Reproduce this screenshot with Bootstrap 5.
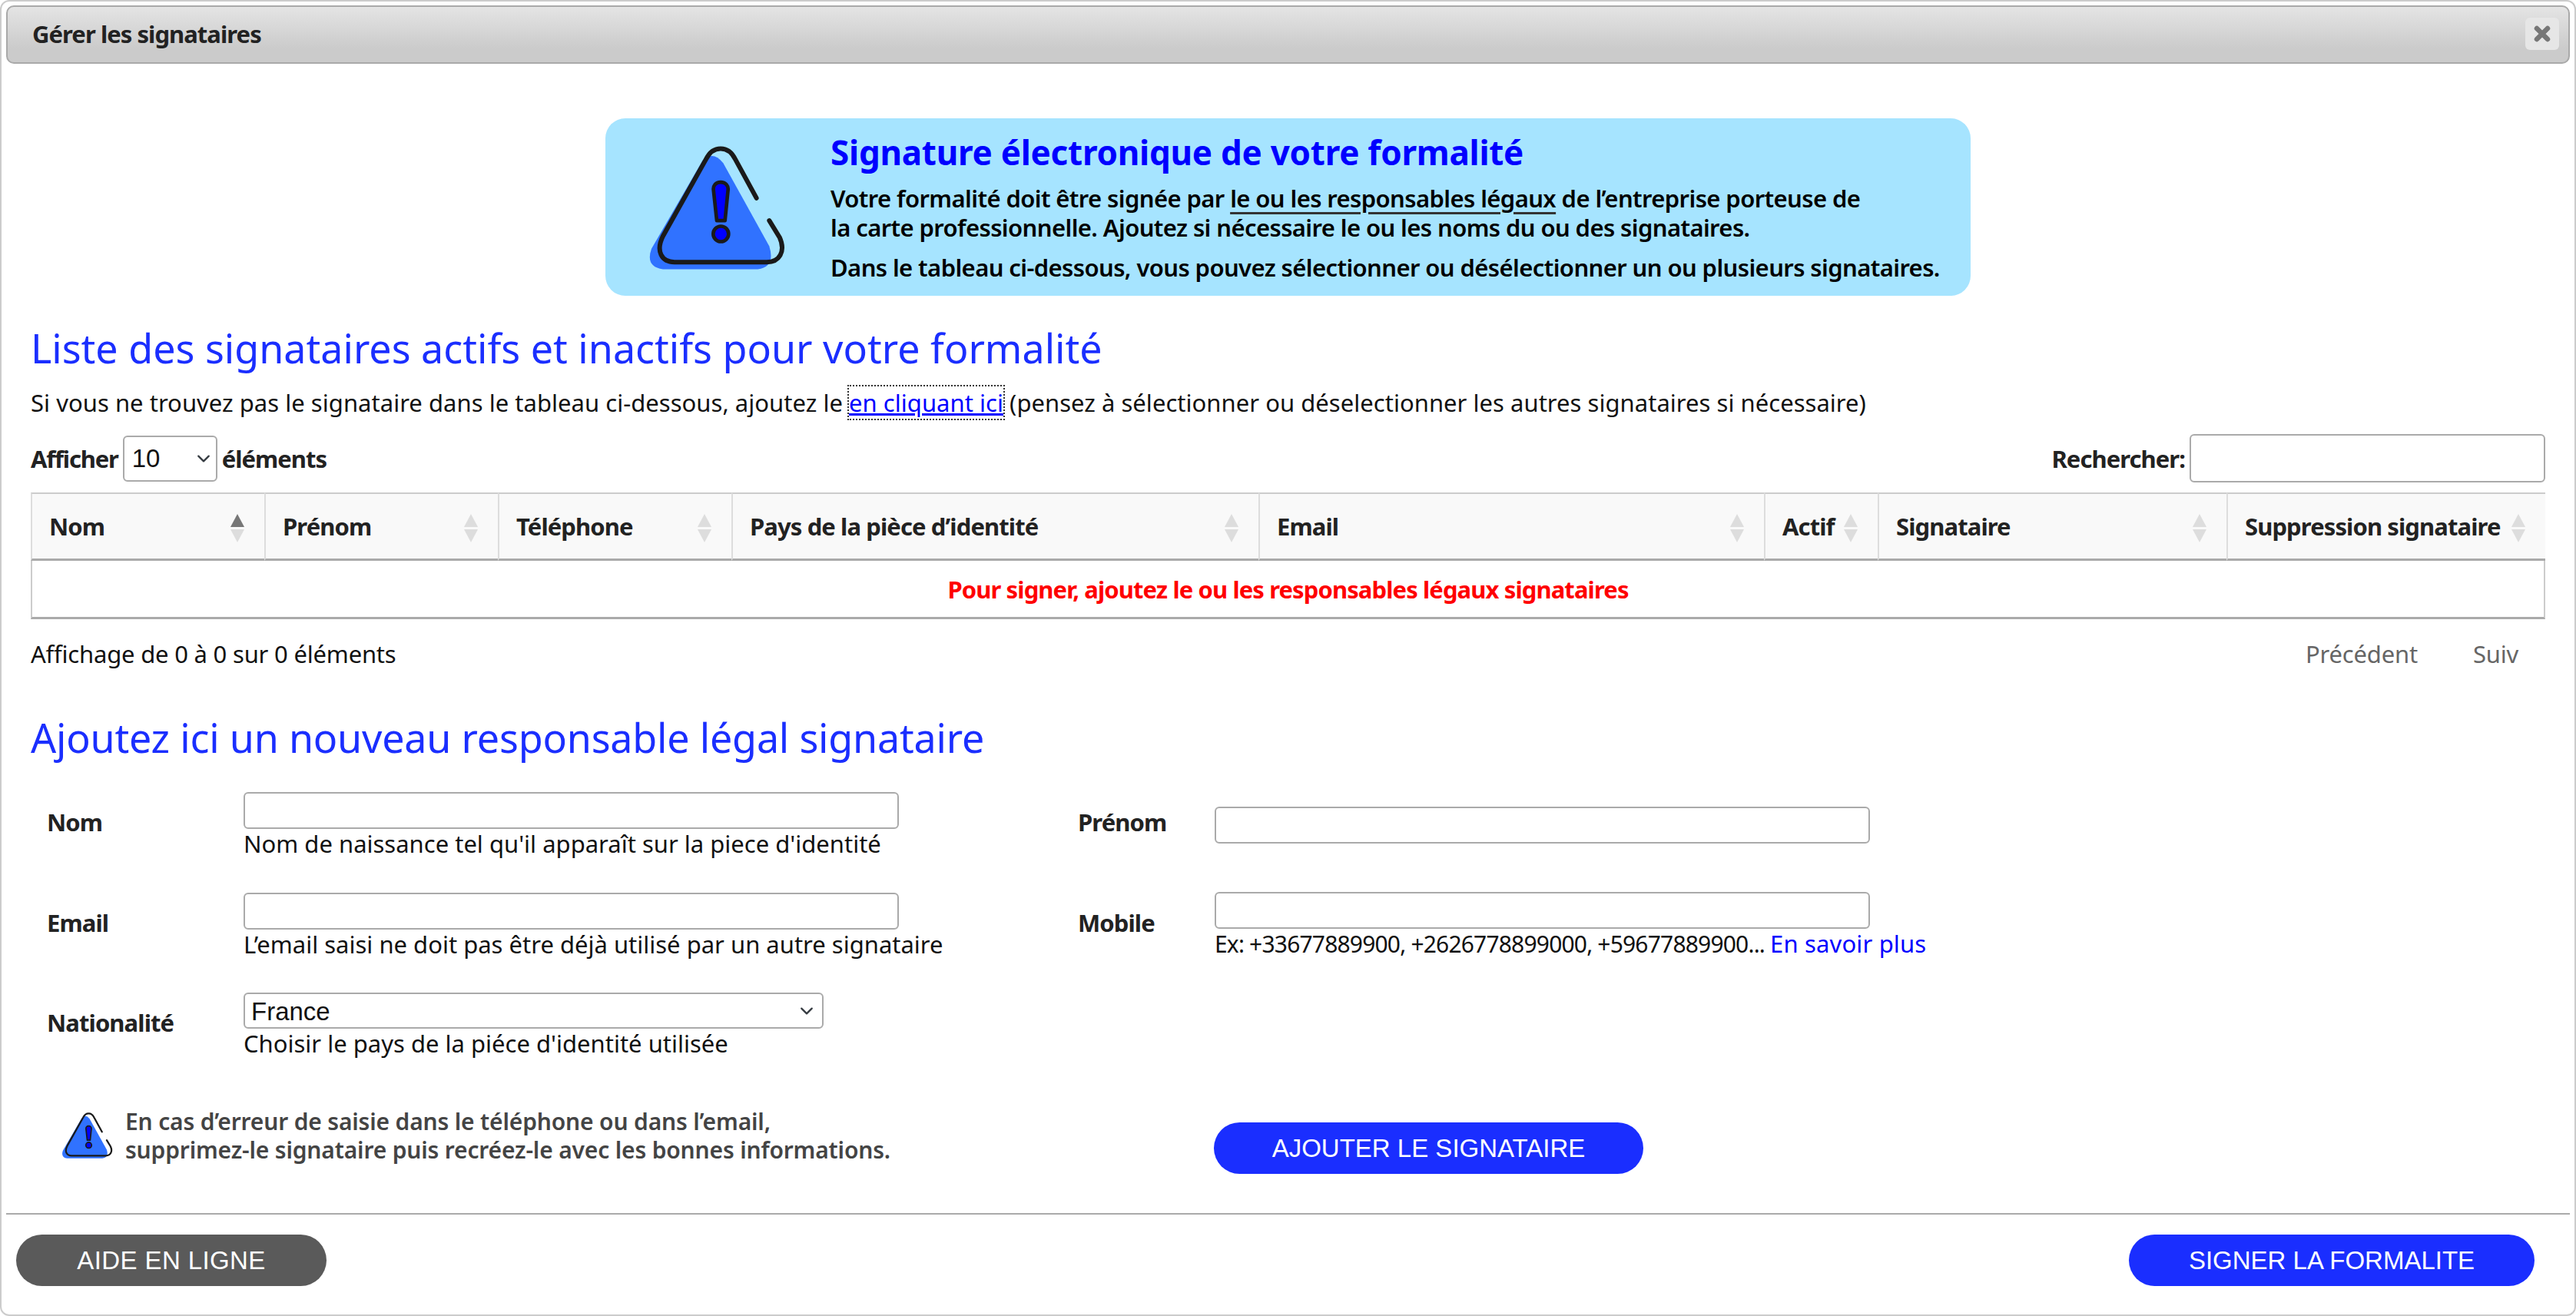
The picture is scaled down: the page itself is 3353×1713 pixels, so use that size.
<!DOCTYPE html>
<html lang="fr">
<head>
<meta charset="utf-8">
<title>Gérer les signataires</title>
<link href="https://cdn.jsdelivr.net/npm/bootstrap@5.3.0/dist/css/bootstrap.min.css" rel="stylesheet">
<style>
html,body{margin:0;background:#fff}
body{font-family:"Noto Sans","Open Sans",sans-serif;font-size:31px;line-height:38px;color:#111}
.frame{width:3353px;height:1713px;border:2px solid #ccc;border-radius:12px;overflow:hidden}
.titlebar{margin:5px 6px 0 6px;height:76px;border:2px solid #a9a9a9;border-radius:10px;background:linear-gradient(#e4e4e4,#cbcbcb 75%);padding:0 12px 2px 32px}
.titletxt{font-size:31px;font-weight:700;color:#222;letter-spacing:-.95px}
.closebox{width:44px;height:42px;background:#e6e6e6;border-radius:6px}
.main{padding:0 38px}
.banner{width:1777px;height:231px;margin-top:71px;background:#a6e4ff;border-radius:26px;color:#000;font-weight:600;letter-spacing:-.6px}
.bannerico{width:293px;flex:none;padding-left:55px;padding-top:33px}
.bantitle{font-size:44px;line-height:50px;font-weight:700;color:#00f;margin:0;padding-top:19px;padding-bottom:16px;letter-spacing:-.26px}
.banner p{margin:0}
.bannerp3{margin-top:14px!important}
.ul2{text-decoration:underline;text-decoration-thickness:3px;text-decoration-color:#333;text-underline-offset:6px}
.sect{font-size:52px;line-height:60px;font-weight:400;color:#1a2eff;margin:0}
.sect1{margin-top:38px}
.intro{margin:22px 0 0;letter-spacing:.03px}
.intro a{color:#00f;outline:2px dotted #333;outline-offset:0}
.toolbar{margin-top:22px;height:63px}
.lblb{font-weight:700;color:#222;letter-spacing:-.95px}
.afflbl{letter-spacing:-1.2px}
.lensel{width:123px;height:60px;font-family:"Liberation Sans",sans-serif;font-size:33px;letter-spacing:0;padding:0 0 0 10px;border:2px solid #aaa;border-radius:6px;margin:0 6px;color:#111;background-size:24px 18px;background-position:right 4px center}
.searchbox{width:463px;height:63px;border:2px solid #aaa;border-radius:6px;margin-left:6px;padding:0}
.dt{table-layout:fixed;width:3273px;margin:13px 0 0;border-collapse:separate;border-spacing:0}
.dt th{background:#f9f9f9;height:89px;padding:0 22px;border:0;border-top:2px solid #ccc;border-left:2px solid #ddd;border-bottom:3px solid #aaa;font-size:31px;font-weight:700;color:#222;letter-spacing:-.9px;vertical-align:middle;position:relative;white-space:nowrap}
.dt td{height:76px;padding:0;border:0;border-left:2px solid #ccc;border-right:2px solid #ccc;border-bottom:3px solid #aaa;text-align:center;color:#f00;font-weight:700;letter-spacing:-.9px;vertical-align:middle}
.sorter{position:absolute;right:26px;top:26px;width:18px;height:37px}
.tinfo{margin-top:26px;letter-spacing:-.2px}
.pagenav{color:#666;gap:72px;padding-right:35px}
.sect2{margin-top:60px;letter-spacing:-.2px}
.formgrid{display:grid;grid-template-columns:254px 854px 232px 178px 854px;row-gap:44px;margin-top:41px;padding-left:23px;align-items:center}
.flbl{font-weight:700;color:#222;letter-spacing:-.9px;padding-bottom:8px;margin-left:-2px}
.flblr{margin-left:0}
.finp{width:853px;height:48px;border:2px solid #aaa;border-radius:6px;padding:0}
.fsel{width:755px;height:47px;font-family:"Liberation Sans",sans-serif;font-size:33px;line-height:40px;padding:2px 0 0 8px;border:2px solid #aaa;border-radius:6px;color:#111;background-size:24px 18px;background-position:right 8px center}
.helper{font-size:31px;line-height:38px;color:#111;white-space:nowrap}
.helperex{font-size:30px;letter-spacing:-.82px}
.helper a{color:#00f;text-decoration:none;font-size:31px;letter-spacing:.15px}
.warnrow{margin-top:64px;padding-left:40px;height:77px}
.warnico{width:69px;flex:none}
.warntxt{margin-left:14px;font-weight:600;color:#444;line-height:37px;font-size:30px;letter-spacing:-.17px}
.actbtn{font-family:"Liberation Sans",sans-serif;font-size:33px;line-height:1;color:#fff;border:0;border-radius:34px;height:67px;padding:0;margin-left:0}
.actbtn:hover{color:#fff}
.addbtn{width:559px;background:#1a2eff;margin-top:20px}
.footline{margin:61px 6px 0 6px;border-top:2px solid #aaa;padding:26px 46px 0 13px}
.helpbtn{width:404px;background:#5a5a5a;letter-spacing:.4px}
.signbtn{width:528px;background:#1a2eff}
.warncol{width:1500px;flex:none}
</style>
</head>
<body>
<svg width="0" height="0" class="d-block">
  <symbol id="warn" viewBox="250 170 540 500">
    <path d="M465 235 Q505 195 545 245 L725 570 Q750 650 680 660 L310 660 Q240 650 265 580 Z" fill="#3072ff"/>
    <path d="M675 382 L592 230 C565 175 505 175 478 230 L310 530 C280 590 305 632 355 632 L715 632 C765 632 790 590 765 535 L725 470" fill="none" stroke="#1a1a1a" stroke-width="18" stroke-linecap="round"/>
    <path d="M535 320 C515 320 505 335 507 350 L520 470 L552 470 L564 350 C566 335 555 320 535 320 Z" fill="#00f" stroke="#1a1a1a" stroke-width="14" stroke-linejoin="round"/>
    <circle cx="536" cy="522" r="30" fill="#00f" stroke="#1a1a1a" stroke-width="14"/>
  </symbol>
  <symbol id="srt" viewBox="0 0 18 37">
    <path d="M9 0 L18 17 H0 Z" fill="currentColor"/>
    <path d="M9 37 L18 20 H0 Z" fill="#ddd"/>
  </symbol>
</svg>
<div class="frame">
  <div class="titlebar d-flex align-items-center justify-content-between">
    <span class="titletxt">Gérer les signataires</span>
    <span class="closebox d-flex align-items-center justify-content-center">
      <svg width="22" height="22" viewBox="0 0 22 22"><path d="M4 4 L18 18 M18 4 L4 18" stroke="#777" stroke-width="6.5" stroke-linecap="round"/></svg>
    </span>
  </div>
  <div class="main">
    <div class="banner mx-auto d-flex">
      <div class="bannerico"><svg width="180" height="167"><use href="#warn"/></svg></div>
      <div>
        <h2 class="bantitle">Signature électronique de votre formalité</h2>
        <p>Votre formalité doit être signée par <span class="ul2">le ou les responsables légaux</span> de l’entreprise porteuse de<br>la carte professionnelle. Ajoutez si nécessaire le ou les noms du ou des signataires.</p>
        <p class="bannerp3">Dans le tableau ci-dessous, vous pouvez sélectionner ou désélectionner un ou plusieurs signataires.</p>
      </div>
    </div>
    <h3 class="sect sect1">Liste des signataires actifs et inactifs pour votre formalité</h3>
    <p class="intro">Si vous ne trouvez pas le signataire dans le tableau ci-dessous, ajoutez le <a href="#">en cliquant ici</a> (pensez à sélectionner ou déselectionner les autres signataires si nécessaire)</p>
    <div class="toolbar d-flex justify-content-between align-items-center">
      <div class="d-flex align-items-center lblb"><span class="afflbl">Afficher</span>
        <select class="form-select lensel"><option>10</option></select> éléments</div>
      <div class="d-flex align-items-center lblb">Rechercher:<input class="form-control searchbox" type="text"></div>
    </div>
    <table class="table dt">
      <colgroup><col style="width:304px"><col style="width:304px"><col style="width:304px"><col style="width:686px"><col style="width:658px"><col style="width:148px"><col style="width:454px"><col style="width:415px"></colgroup>
      <thead><tr>
        <th>Nom<svg class="sorter" style="color:#777"><use href="#srt"/></svg></th>
        <th>Prénom<svg class="sorter" style="color:#ddd"><use href="#srt"/></svg></th>
        <th>Téléphone<svg class="sorter" style="color:#ddd"><use href="#srt"/></svg></th>
        <th>Pays de la pièce d’identité<svg class="sorter" style="color:#ddd"><use href="#srt"/></svg></th>
        <th>Email<svg class="sorter" style="color:#ddd"><use href="#srt"/></svg></th>
        <th>Actif<svg class="sorter" style="color:#ddd"><use href="#srt"/></svg></th>
        <th>Signataire<svg class="sorter" style="color:#ddd"><use href="#srt"/></svg></th>
        <th>Suppression signataire<svg class="sorter" style="color:#ddd"><use href="#srt"/></svg></th>
      </tr></thead>
      <tbody><tr><td colspan="8">Pour signer, ajoutez le ou les responsables légaux signataires</td></tr></tbody>
    </table>
    <div class="tinfo d-flex justify-content-between">
      <span>Affichage de 0 à 0 sur 0 éléments</span>
      <span class="pagenav d-flex"><span>Précédent</span><span>Suiv</span></span>
    </div>
    <h3 class="sect sect2">Ajoutez ici un nouveau responsable légal signataire</h3>
    <div class="formgrid">
      <div class="flbl">Nom</div>
      <div><input class="form-control finp" type="text"><div class="helper">Nom de naissance tel qu'il apparaît sur la piece d'identité</div></div>
      <div></div>
      <div class="flbl flblr">Prénom</div>
      <div><input class="form-control finp" type="text"></div>

      <div class="flbl">Email</div>
      <div><input class="form-control finp" type="text"><div class="helper">L’email saisi ne doit pas être déjà utilisé par un autre signataire</div></div>
      <div></div>
      <div class="flbl flblr">Mobile</div>
      <div><input class="form-control finp" type="text"><div class="helper helperex">Ex: +33677889900, +2626778899000, +59677889900... <a href="#">En savoir plus</a></div></div>

      <div class="flbl">Nationalité</div>
      <div><select class="form-select fsel"><option>France</option></select><div class="helper">Choisir le pays de la piéce d'identité utilisée</div></div>
    </div>
    <div class="warnrow d-flex align-items-start">
      <div class="warncol d-flex align-items-center">
        <div class="warnico"><svg width="67" height="62"><use href="#warn"/></svg></div>
        <div class="warntxt">En cas d’erreur de saisie dans le téléphone ou dans l’email,<br>supprimez-le signataire puis recréez-le avec les bonnes informations.</div>
      </div>
      <button type="button" class="btn actbtn addbtn">AJOUTER LE SIGNATAIRE</button>
    </div>
  </div>
  <div class="footline d-flex justify-content-between">
    <button type="button" class="btn actbtn helpbtn">AIDE EN LIGNE</button>
    <button type="button" class="btn actbtn signbtn">SIGNER LA FORMALITE</button>
  </div>
</div>
<script src="https://cdn.jsdelivr.net/npm/bootstrap@5.3.0/dist/js/bootstrap.bundle.min.js"></script>
</body>
</html>
